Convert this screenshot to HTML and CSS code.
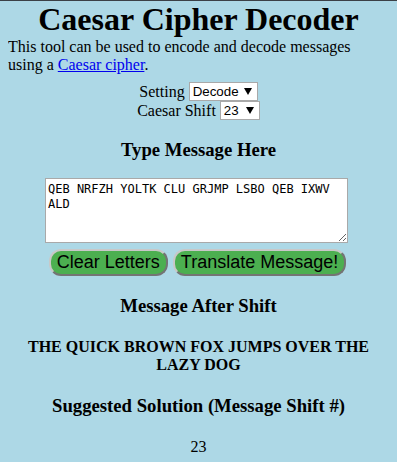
FILE: index.html
```html
<!DOCTYPE html>
<html>
<head>
<meta charset="utf-8">
<title>Caesar Cipher Decoder</title>
<link rel="stylesheet" href="styles.css">
</head>
<body>
<h1 class="title">Caesar Cipher Decoder</h1>
<p class="intro">This tool can be used to encode and decode messages using a <a href="#" class="link">Caesar cipher</a>.</p>
<div class="controls">
  <div class="row">
    <label class="lbl">Setting</label>
    <select class="sel sel-mode"><option>Decode</option><option>Encode</option></select>
  </div>
  <div class="row">
    <label class="lbl">Caesar Shift</label>
    <select class="sel sel-shift"><option>23</option></select>
  </div>
</div>
<h3 class="heading">Type Message Here</h3>
<div class="input-wrap">
  <textarea class="message">QEB NRFZH YOLTK CLU GRJMP LSBO QEB IXWV ALD</textarea>
</div>
<div class="buttons">
  <button class="btn">Clear Letters</button>
  <button class="btn">Translate Message!</button>
</div>
<h3 class="heading">Message After Shift</h3>
<h4 class="result">THE QUICK BROWN FOX JUMPS OVER THE LAZY DOG</h4>
<h3 class="heading">Suggested Solution (Message Shift #)</h3>
<div class="shift-num">23</div>
</body>
</html>
```

FILE: styles.css
```css
html {
  background: #add8e6;
  border-top: 1px solid #3b4046;
}
body {
  margin: 0 8px;
  background: #add8e6;
  font-family: "Liberation Serif", "Times New Roman", serif;
  font-size: 16px;
  color: #000;
}
.title {
  margin: 0;
  font-size: 32px;
  font-weight: bold;
  text-align: center;
}
.intro {
  margin: 0;
}
.link {
  color: #0000ee;
}
.controls {
  display: flex;
  flex-direction: column;
  align-items: center;
  margin-top: 8px;
}
.row {
  display: flex;
  align-items: center;
  gap: 4px;
  height: 19px;
}
.sel {
  appearance: none;
  -webkit-appearance: none;
  font-family: "Liberation Sans", Arial, sans-serif;
  font-size: 13.33px;
  color: #000;
  background-color: #fff;
  background-image: url("data:image/svg+xml;utf8,<svg xmlns='http://www.w3.org/2000/svg' width='8' height='7'><path d='M0 0H8L4 7Z' fill='black'/></svg>");
  background-repeat: no-repeat;
  background-position: right 5px center;
  border: 1px solid #a9a9a9;
  border-radius: 0;
  height: 19px;
  padding: 0 18px 0 3px;
  margin: 0;
}
.sel-mode {
  width: 69px;
}
.sel-shift {
  width: 40px;
}
.heading {
  font-size: 18.72px;
  font-weight: bold;
  text-align: center;
  margin: 19px 0 17px;
}
.input-wrap {
  display: flex;
  justify-content: center;
  padding-right: 4px;
}
.message {
  width: 303px;
  height: 65px;
  box-sizing: border-box;
  font-family: "DejaVu Sans Mono", monospace;
  font-size: 12px;
  line-height: 15px;
  padding: 3px 2px;
  border: 1px solid #a9a9a9;
  background: #fff;
  color: #000;
  resize: both;
  margin: 0;
}
.buttons {
  display: flex;
  justify-content: center;
  gap: 5px;
  margin-top: 6px;
  padding-right: 2px;
}
.btn {
  font-family: "Liberation Sans", Arial, sans-serif;
  font-size: 18px;
  color: #000;
  background: #4caf50;
  border: 2px outset #c8c8c8;
  border-radius: 12px;
  padding: 1px 6px;
  margin: 0;
}
.result {
  font-size: 16px;
  font-weight: bold;
  text-align: center;
  margin: 21px 0;
}
.shift-num {
  text-align: center;
  margin-top: 21px;
}
```
